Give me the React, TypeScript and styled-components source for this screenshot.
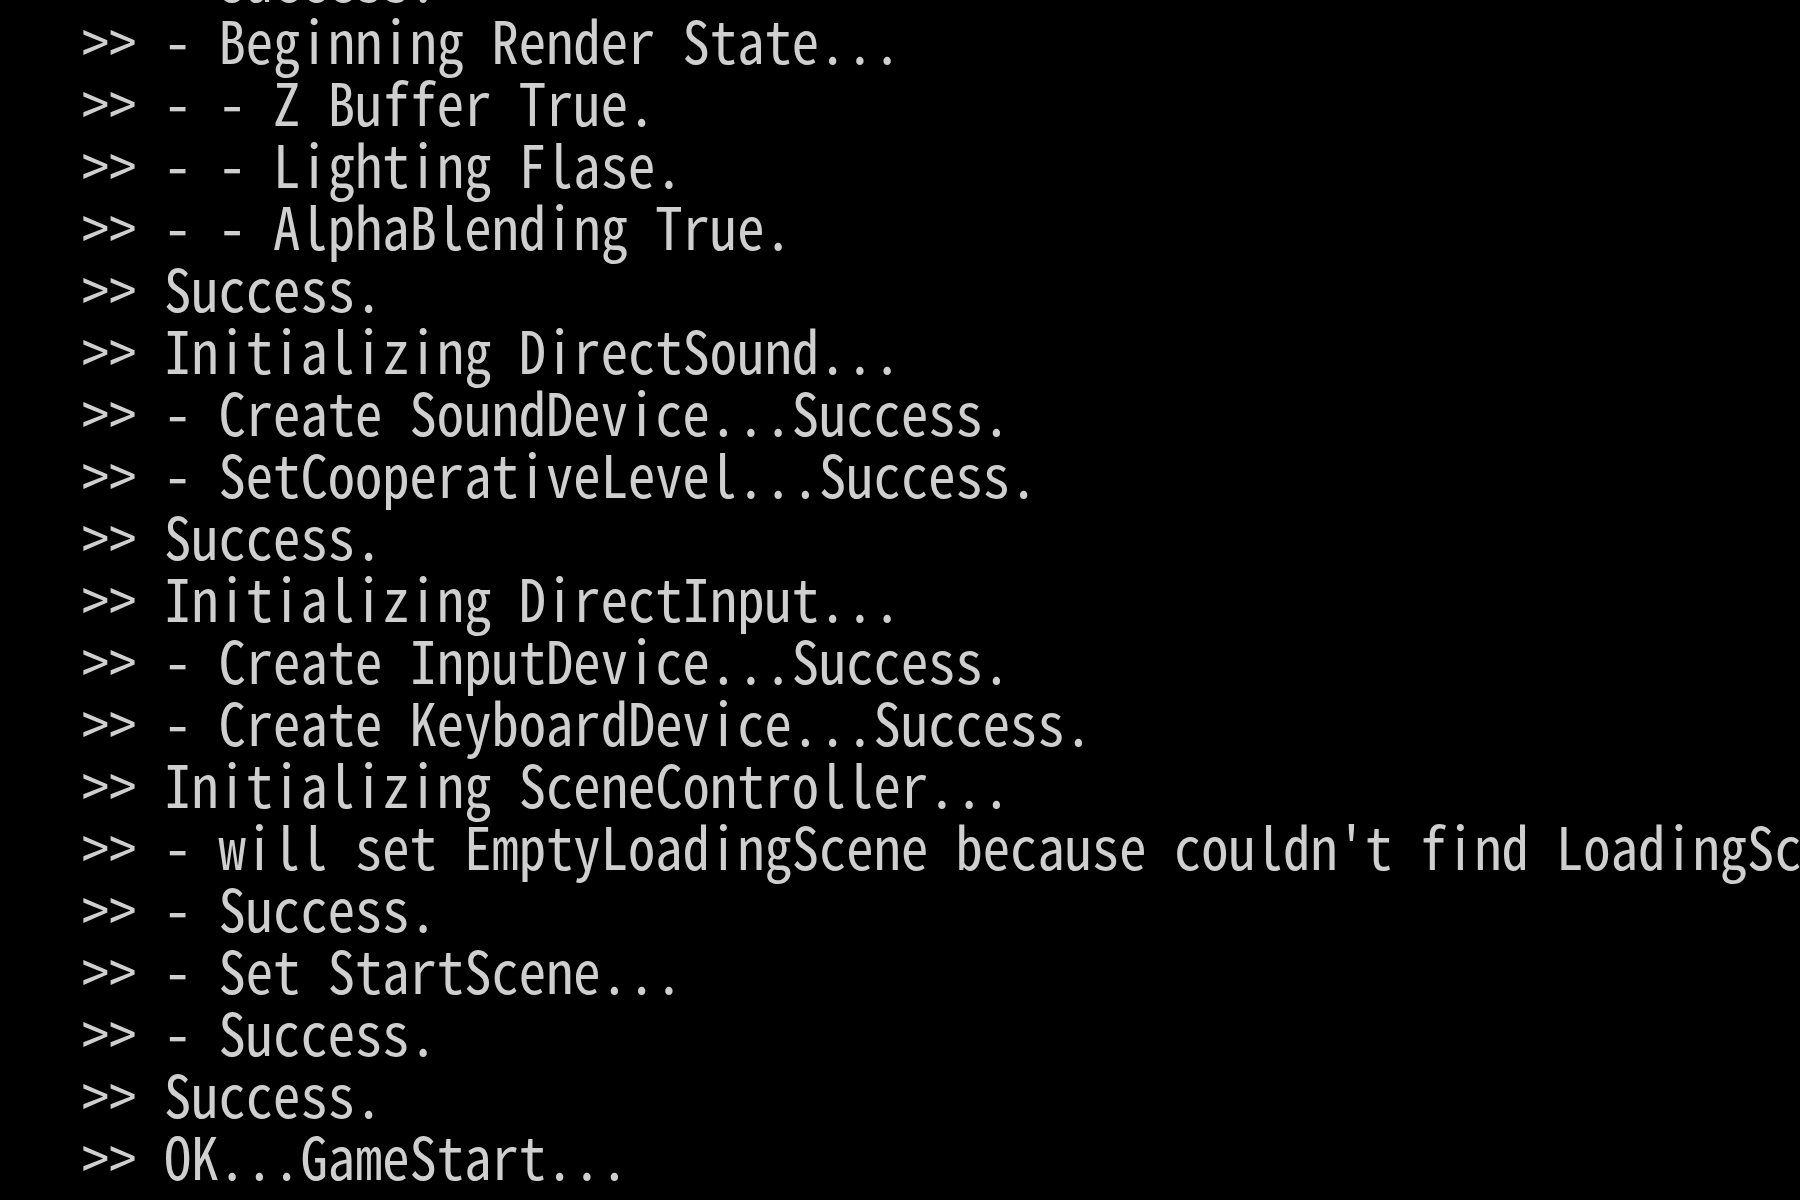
import React from "react";
import styled, { createGlobalStyle } from "styled-components";

const Global = createGlobalStyle`
  html, body {
    margin: 0;
    padding: 0;
    background: #000000;
  }
  #root {
    width: 1800px;
    height: 1200px;
    overflow: hidden;
  }
`;

const Screen = styled.main`
  width: 1800px;
  height: 1200px;
  background: #000000;
  display: flex;
  flex-direction: column;
  justify-content: flex-end;
  overflow: hidden;
  padding: 0 0 12px 82px;
  box-sizing: border-box;
`;

const Log = styled.div`
  display: flex;
  flex-direction: column;
`;

const Line = styled.div`
  font-family: "Noto Sans Mono CJK JP", "DejaVu Sans Mono", monospace;
  font-size: 54.6px;
  font-weight: 200;
  line-height: 62px;
  height: 62px;
  color: #cfcfcf;
  white-space: pre;
  transform: scaleY(1.08);
  transform-origin: 0 55px;
`;

const lines = [
  ">> - Success.",
  ">> - Beginning Render State...",
  ">> - - Z Buffer True.",
  ">> - - Lighting Flase.",
  ">> - - AlphaBlending True.",
  ">> Success.",
  ">> Initializing DirectSound...",
  ">> - Create SoundDevice...Success.",
  ">> - SetCooperativeLevel...Success.",
  ">> Success.",
  ">> Initializing DirectInput...",
  ">> - Create InputDevice...Success.",
  ">> - Create KeyboardDevice...Success.",
  ">> Initializing SceneController...",
  ">> - will set EmptyLoadingScene because couldn't find LoadingScene...",
  ">> - Success.",
  ">> - Set StartScene...",
  ">> - Success.",
  ">> Success.",
  ">> OK...GameStart...",
];

export default function App() {
  return (
    <>
      <Global />
      <Screen>
        <Log>
          {lines.map((l, i) => (
            <Line key={i}>{l}</Line>
          ))}
        </Log>
      </Screen>
    </>
  );
}
